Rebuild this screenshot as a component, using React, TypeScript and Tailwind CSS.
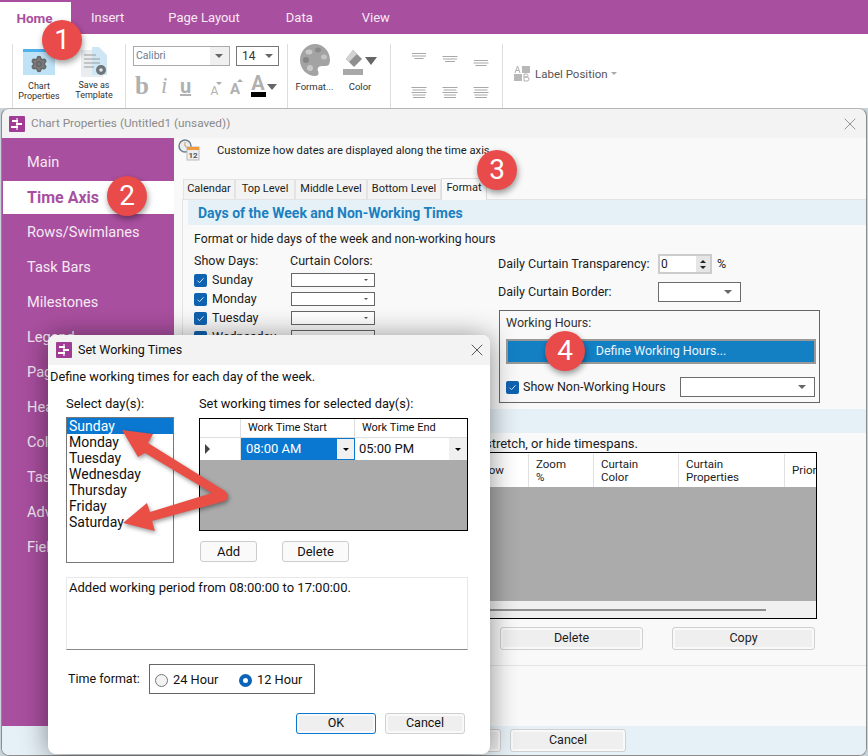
import { Settings, X } from "lucide-react";

const NAV = ["Main", "Time Axis", "Rows/Swimlanes", "Task Bars", "Milestones", "Legend", "Pages", "Header", "Columns", "Tasks", "Advanced", "Fields"];
const DAYS = ["Sunday", "Monday", "Tuesday", "Wednesday", "Thursday", "Friday", "Saturday"];
const TABS = [
  { label: "Calendar", w: "w-[52px]" },
  { label: "Top Level", w: "w-[60px]" },
  { label: "Middle Level", w: "w-[72px]" },
  { label: "Bottom Level", w: "w-[74px]" },
];
const COLS = [
  { label: "Zoom %", w: "w-[65px]" },
  { label: "Curtain Color", w: "w-[85px]" },
  { label: "Curtain Properties", w: "w-[106px]" },
];

const Caret = ({ className = "border-x-[4px] border-t-[4px] border-t-[#666]" }: { className?: string }) => (
  <span className={`h-0 w-0 border-x-transparent ${className}`} />
);

const Badge = ({ n, className }: { n: number; className: string }) => (
  <div className={`absolute flex h-10 w-10 items-center justify-center rounded-full bg-[#e94a4a] text-[28px] leading-none text-white shadow-[1px_3px_6px_rgba(0,0,0,0.4)] ${className}`}>
    {n}
  </div>
);

const AppIcon = () => (
  <svg width="16" height="16" viewBox="0 0 16 16" className="shrink-0">
    <rect width="16" height="16" rx="1" fill="#a03c96" />
    <path d="M7 2h2v12H7z" fill="#d9a8d3" />
    <path d="M3 4h6v2H3zM7 7h6v2H7zM2 10h7v2H2z" fill="#fff" />
  </svg>
);

const Check = () => (
  <span className="flex h-[13px] w-[13px] shrink-0 items-center justify-center rounded-[2px] bg-[#0f62b0]">
    <svg width="9" height="9" viewBox="0 0 9 9">
      <path d="M1.5 4.7l2 2 4-4.4" fill="none" stroke="#cfe3f5" strokeWidth="1" />
    </svg>
  </span>
);

const DropBox = ({ className }: { className: string }) => (
  <div className={`flex items-center justify-end border border-[#6b6b6b] bg-white pr-2 ${className}`}>
    <Caret />
  </div>
);

const Btn = ({ label, className }: { label: string; className: string }) => (
  <div className={`flex items-center justify-center rounded-[3px] border bg-[#efefef] text-[12.5px] shadow-[inset_0_0_0_2px_#f9f9f9] ${className}`}>
    {label}
  </div>
);

const AlignIcon = ({ widths, className = "" }: { widths: number[]; className?: string }) => (
  <svg width="16" height="12" viewBox="0 0 16 12" className={className}>
    {widths.map((w, i) => (
      <rect key={i} x={(16 - w) / 2} y={i * 2.5} width={w} height="1" fill="#a8a8a8" />
    ))}
  </svg>
);

const Ribbon = () => (
  <div>
    <div className="flex h-[34px] items-end bg-[#a94f9f] text-[13px] text-[#f6eaf5]">
      <div className="flex h-8 w-[71px] items-center justify-center bg-white pr-[2px] text-[13.5px] font-bold text-[#a94f9f]">Home</div>
      <div className="flex h-8 items-center pl-5">Insert</div>
      <div className="flex h-8 items-center pl-[44px]">Page Layout</div>
      <div className="flex h-8 items-center pl-[46px]">Data</div>
      <div className="flex h-8 items-center pl-[49px]">View</div>
    </div>
    <div className="flex h-[74px] bg-white pt-[10px] text-[#333]">
      <div className="w-[13px] border-r border-[#ddd]" />
      <div className="flex w-[113px] border-r border-[#ddd] pl-[6px] pt-[3px] text-center text-[9px] leading-[10px]">
        <div className="flex w-[40px] flex-col items-center">
          <div className="mt-[2px] flex h-[26px] w-[32px] items-center justify-center border-t-[3px] border-[#4db2ee] bg-[#bfe2f6]">
            <Settings size={18} fill="#7b7b7b" stroke="#666" />
          </div>
          <div className="mt-[6px]">Chart<br />Properties</div>
        </div>
        <div className="ml-[12px] flex w-[46px] flex-col items-center">
          <svg width="32" height="30" viewBox="0 0 32 30">
            <path d="M3 3h14l8 7v20H3z" fill="#e9edf0" />
            <path d="M14 0h7l8 8v20H14z" fill="#cfe6f5" />
            <path d="M6 8h12M6 12h16M6 16h16M6 20h10" stroke="#9a9a9a" />
            <circle cx="23" cy="23" r="5" fill="#6f7478" />
            <circle cx="23" cy="23" r="1.8" fill="#dfe8ee" />
          </svg>
          <div className="mt-[3px]">Save as<br />Template</div>
        </div>
      </div>
      <div className="flex w-[162px] flex-col border-r border-[#ddd] pl-[7px] pt-[2px]">
        <div className="flex gap-[6px]">
          <div className="flex h-[20px] w-[97px] items-center justify-between border border-[#aaa] bg-[#f0f0f0] pr-[6px]">
            <span className="flex h-full w-[76px] items-center bg-white pl-[2px] text-[10.5px] text-[#6b7c90]">Calibri</span>
            <Caret />
          </div>
          <div className="flex h-[20px] w-[43px] items-center justify-between border border-[#777] px-[5px] text-[12px]">
            14
            <Caret />
          </div>
        </div>
        <div className="mt-[9px] flex items-end text-[#b0b0b0]">
          <span className="w-[27px] pl-[2px] font-['Liberation_Serif',serif] text-[25px] leading-[22px] font-bold">b</span>
          <span className="w-[20px] pl-[1px] font-['Liberation_Serif',serif] text-[23px] leading-[22px] italic">i</span>
          <span className="w-[27px] text-[20px] leading-[22px] font-bold underline">u</span>
          <span className="flex w-[20px] flex-col items-center pr-[5px] text-[12px] leading-[12px]">
            <Caret className="ml-[8px] border-x-[3px] border-t-[3px] border-t-[#aaa]" />
            A
          </span>
          <span className="flex w-[23px] flex-col items-center pr-[7px] text-[15px] leading-[15px] font-bold">
            <span className="ml-[10px] h-0 w-0 border-x-[3px] border-b-[3px] border-x-transparent border-b-[#aaa]" />
            A
          </span>
          <span className="flex w-[16px] flex-col items-center text-[20px] leading-[16px] font-bold">
            A
            <span className="mt-[1px] h-[5px] w-[15px] bg-black" />
          </span>
          <Caret className="mb-[7px] ml-[1px] border-x-[5px] border-t-[6px] border-t-[#666]" />
        </div>
      </div>
      <div className="flex w-[103px] border-r border-[#ddd] pl-2 text-center text-[9.5px]">
        <div className="flex w-[37px] flex-col items-center">
          <svg width="30" height="32" viewBox="0 0 30 32">
            <path d="M15 0C7 0 0 7 0 16s7 16 15 16c4 0 4-3 3-5s0-5 4-5h4c3 0 4-3 4-6C30 7 23 0 15 0z" fill="#a3a3a3" />
            <ellipse cx="9" cy="8" rx="3.5" ry="2.5" fill="#c9c9c9" />
            <ellipse cx="18" cy="6" rx="3" ry="2.5" fill="#8a8a8a" />
            <ellipse cx="24" cy="13" rx="3" ry="2.5" fill="#c4c4c4" />
            <ellipse cx="6" cy="16" rx="3" ry="3" fill="#858585" />
            <ellipse cx="10" cy="24" rx="3" ry="3" fill="#c9c9c9" />
          </svg>
          <div className="mt-[4px] whitespace-nowrap">Format...</div>
        </div>
        <div className="ml-[9px] flex w-[36px] flex-col items-center">
          <div className="flex h-[32px] items-start pt-[5px]">
            <svg width="20" height="26" viewBox="0 0 20 26">
              <path d="M10 1l9 9-8 8-8-8z" fill="#8f8f8f" />
              <path d="M10 1l4 4-8 8-3-3z" fill="#d2d2d2" />
              <rect y="20" width="20" height="6" fill="#a8a8a8" />
            </svg>
            <Caret className="mt-[8px] ml-[2px] border-x-[6px] border-t-[8px] border-t-[#666]" />
          </div>
          <div className="mt-[4px]">Color</div>
        </div>
      </div>
      <div className="w-[112px] border-r border-[#ddd] pl-[20px] pt-[9px]">
        <div className="grid w-[93px] grid-cols-[31px_31px_31px] gap-y-[15px]">
          <AlignIcon widths={[14, 14, 9]} />
          <AlignIcon widths={[15, 14, 10]} className="mt-[3px]" />
          <AlignIcon widths={[14, 15, 11]} className="mt-[7px]" />
          <AlignIcon widths={[15, 13, 15, 13, 12]} />
          <AlignIcon widths={[15, 13, 15, 12, 12]} />
          <AlignIcon widths={[15, 13, 15, 13, 12]} />
        </div>
      </div>
      <div className="flex items-start pl-[10px] pt-[22px] text-[11.5px] leading-[16px]">
        <svg width="18" height="17" viewBox="0 0 18 17" className="mr-[4px] mt-[-1px]">
          <rect x="9" y="1" width="8" height="7" fill="#b8b8b8" />
          <rect x="1" y="9" width="8" height="7" fill="#b8b8b8" />
          <path d="M2 8l2.5-7L7 8M3 5.5h3" fill="none" stroke="#b0b0b0" />
          <path d="M11 9v7h3a2 2 0 000-4h-3 3a1.6 1.6 0 000-3z" fill="none" stroke="#b0b0b0" />
        </svg>
        <span className="text-[#555]">Label Position</span>
        <Caret className="mt-[6px] ml-[3px] border-x-[3px] border-t-[3px] border-t-[#aaa]" />
      </div>
    </div>
  </div>
);

const ChartWindow = () => (
  <div className="absolute top-[108px] left-[1px] flex h-[648px] w-[866px] flex-col overflow-hidden rounded-lg border border-[#8c8c8c] border-t-[#b5b5b5] bg-[#f3f3f3] text-[12.5px] text-[#1c1c1c]">
    <div className="flex h-[29px] shrink-0 items-center pr-[6px] pl-[7px] text-[11.8px] text-[#8b8b8b]">
      <AppIcon />
      <span className="ml-[6px] flex-1">Chart Properties (Untitled1 (unsaved))</span>
      <X size={20} strokeWidth={0.8} className="text-[#666]" />
    </div>
    <div className="flex min-h-0 flex-1">
      <div className="w-[172px] shrink-0 bg-[#a94f9f] pt-[7px] pl-[1px] text-[14.6px] text-[#f5e9f4]">
        {NAV.map((n) => (
          <div
            key={n}
            className={n === "Time Axis" ? "my-px flex h-[33px] items-center bg-white pl-[24px] text-[16px] font-bold text-[#a94f9f]" : "flex h-[35px] items-center pl-[24px]"}
          >
            {n}
          </div>
        ))}
      </div>
      <div className="min-w-0 flex-1 bg-[#f9f9f9]">
        <div className="flex h-[40px] items-start pt-[1px] pl-[4px]">
          <svg width="22" height="22" viewBox="0 0 22 22">
            <circle cx="7" cy="7" r="6" fill="#e8eef2" stroke="#70808c" strokeWidth="1.5" />
            <path d="M7 3v4l3 2" fill="none" stroke="#e2913c" />
            <rect x="9" y="8" width="12" height="13" fill="#eee" stroke="#bbb" />
            <rect x="9" y="8" width="12" height="3" fill="#f09a3e" />
            <text x="15" y="19" fontSize="8" fontWeight="700" textAnchor="middle" fill="#555">12</text>
          </svg>
          <span className="mt-[4px] ml-[17px] text-[11.2px]">Customize how dates are displayed along the time axis</span>
        </div>
        <div className="flex h-[21px] items-end pl-[9px]">
          {TABS.map((t) => (
            <div key={t.label} className={`flex h-[20px] items-center justify-center border border-b-0 border-[#e3e3e3] bg-[#f3f3f3] text-[11px] ${t.w}`}>
              {t.label}
            </div>
          ))}
          <div className="relative top-px flex h-[22px] w-[46px] items-center justify-center border border-b-0 border-[#ddd] bg-[#f9f9f9] pb-[2px] text-[11px]">Format</div>
        </div>
        <div className="ml-[8px] h-[528px] border-t border-l border-[#e3e3e3] pl-[5px]">
          <div className="flex h-[25px] items-center bg-[#e6f1f7] pt-[2px] pl-[10px] text-[14px] font-bold text-[#1b7fc0]">Days of the Week and Non-Working Times</div>
          <div className="flex h-[184px]">
            <div className="w-[306px] pl-[6px]">
              <div className="mt-[7px] text-[12.25px] leading-[14px] whitespace-nowrap">Format or hide days of the week and non-working hours</div>
              <div className="mt-[8px] flex leading-[14px]">
                <span className="w-[96px]">Show Days:</span>
                <span>Curtain Colors:</span>
              </div>
              {DAYS.slice(0, 4).map((d) => (
                <div key={d} className="mt-[5px] flex h-[14px] items-center">
                  <Check />
                  <span className="ml-[5px] w-[79px]">{d}</span>
                  <div className="flex h-[14px] w-[84px] items-center justify-end border border-[#666] bg-white pr-[6px]">
                    <Caret className="border-x-[2.5px] border-t-[2.5px] border-t-[#555]" />
                  </div>
                </div>
              ))}
            </div>
            <div className="pt-[29px] pl-[4px]">
              <div className="flex h-[20px] items-center">
                <span className="w-[160px]">Daily Curtain Transparency:</span>
                <div className="flex h-[20px] w-[54px] items-center justify-between border-2 border-[#ccc] bg-white pl-[1px] text-[12px]">
                  0
                  <div className="flex h-full w-[14px] flex-col items-center justify-center gap-[3px] bg-[#e6e6e6]">
                    <span className="h-0 w-0 border-x-[3px] border-b-[3px] border-x-transparent border-b-[#222]" />
                    <span className="h-0 w-0 border-x-[3px] border-t-[3px] border-x-transparent border-t-[#222]" />
                  </div>
                </div>
                <span className="ml-[5px]">%</span>
              </div>
              <div className="mt-[8px] flex h-[20px] items-center">
                <span className="w-[160px]">Daily Curtain Border:</span>
                <DropBox className="h-[20px] w-[83px]" />
              </div>
              <div className="mt-[8px] ml-px h-[93px] w-[321px] border border-[#666] pt-[4px] pr-[3px] pl-[6px]">
                <div className="leading-[16px] text-[#333]">Working Hours:</div>
                <div className="mt-[8px] flex h-[25px] items-center justify-center border-2 border-[#999] bg-[#1380c4] text-[#eaf4fb]">Define Working Hours...</div>
                <div className="mt-[13px] flex items-center">
                  <Check />
                  <span className="ml-[4px] w-[157px]">Show Non-Working Hours</span>
                  <DropBox className="h-[20px] w-[135px]" />
                </div>
              </div>
            </div>
          </div>
          <div className="h-[24px] bg-[#e6f1f7]" />
          <div className="flex h-[19px] items-end justify-end pr-[228px] text-[13px] leading-[16px]">, stretch, or hide timespans.</div>
          <div className="ml-[6px] flex h-[167px] w-[623px] flex-col border border-black bg-[#ababab]">
            <div className="flex h-[34px] bg-white pt-px text-[11.5px] leading-[13px]">
              <div className="flex flex-1 items-center justify-end border-r border-[#e0e0e0] pr-[24px]">Show</div>
              {COLS.map((c) => (
                <div key={c.label} className={`flex items-center border-r border-[#e0e0e0] pl-[7px] ${c.w}`}>
                  <span className="w-[36px]">{c.label}</span>
                </div>
              ))}
              <div className="flex w-[31px] items-center overflow-hidden pl-[7px]">Priority</div>
            </div>
            <div className="flex-1" />
            <div className="flex h-[17px] items-center bg-[#f0f0f0] pr-[50px]">
              <div className="h-[2px] flex-1 bg-[#8f8f8f]" />
            </div>
          </div>
          <div className="mt-[8px] flex justify-end gap-[29px] pr-[51px]">
            <Btn label="Delete" className="h-[23px] w-[143px] border-[#d0d0d0]" />
            <Btn label="Copy" className="h-[23px] w-[143px] border-[#d0d0d0]" />
          </div>
          <div className="mt-[15px] border-t border-[#e5e5e5]" />
        </div>
      </div>
    </div>
    <div className="flex h-[29px] shrink-0 items-start justify-end gap-[9px] bg-[#e6f1f7] pt-[3px] pr-[240px]">
      <Btn label="OK" className="h-[23px] w-[116px] border-[#d0d0d0]" />
      <Btn label="Cancel" className="h-[23px] w-[116px] border-[#d0d0d0]" />
    </div>
  </div>
);

const WorkingTimes = () => (
  <div className="absolute top-[335px] left-[48px] flex h-[419px] w-[442px] flex-col overflow-hidden rounded-lg bg-white text-[12.8px] text-[#111] shadow-[0_2px_28px_rgba(0,0,0,0.45)]">
    <div className="flex h-[30px] shrink-0 items-center bg-[#f3f3f3] pr-[3px] pl-[8px] text-[12.5px]">
      <AppIcon />
      <span className="ml-[6px] flex-1">Set Working Times</span>
      <X size={20} strokeWidth={0.9} className="text-[#222]" />
    </div>
    <div className="pt-[4px] pl-[2px] leading-[16px]">Define working times for each day of the week.</div>
    <div className="mt-[11px] flex pl-[18px]">
      <div className="w-[133px]">
        <div className="text-[13px] leading-[15px]">Select day(s):</div>
        <div className="mt-[6px] h-[146px] w-[108px] border border-[#777] text-[14px] leading-[16px]">
          {DAYS.map((d) => (
            <div key={d} className={d === "Sunday" ? "bg-[#0a78d0] pl-[2px] text-white" : "pl-[2px]"}>{d}</div>
          ))}
        </div>
      </div>
      <div>
        <div className="leading-[15px]">Set working times for selected day(s):</div>
        <div className="mt-[7px] flex h-[113px] w-[269px] flex-col border border-black bg-[#ababab]">
          <div className="flex h-[19px] bg-white text-[11px]">
            <div className="w-[41px] border-r border-b border-[#ddd]" />
            <div className="flex w-[114px] items-center border-r border-b border-[#ddd] pl-[7px]">Work Time Start</div>
            <div className="flex flex-1 items-center border-b border-[#ddd] pl-[7px]">Work Time End</div>
          </div>
          <div className="flex h-[22px] bg-white text-[13px]">
            <div className="flex w-[41px] items-center border-r border-[#ddd] pl-[5px]">
              <span className="h-0 w-0 border-y-[5px] border-l-[5px] border-y-transparent border-l-[#444]" />
            </div>
            <div className="flex w-[114px] items-center justify-between border border-[#0a78d0] bg-[#0a78d0] pl-[4px] text-white">
              08:00 AM
              <span className="flex h-full w-[17px] items-center justify-center bg-[#f0f0f0]"><Caret className="border-x-[3px] border-t-[3px] border-t-black" /></span>
            </div>
            <div className="flex flex-1 items-center justify-between pl-[4px]">
              05:00 PM
              <span className="flex h-full w-[18px] items-center justify-center bg-[#f0f0f0]"><Caret className="border-x-[3px] border-t-[3px] border-t-black" /></span>
            </div>
          </div>
        </div>
        <div className="mt-[10px] flex gap-[25px] pl-px text-[13px]">
          <div className="flex h-[21px] w-[57px] items-center justify-center rounded-[3px] border border-[#ccc] bg-[#fafafa]">Add</div>
          <div className="flex h-[21px] w-[67px] items-center justify-center rounded-[3px] border border-[#ccc] bg-[#fafafa]">Delete</div>
        </div>
      </div>
    </div>
    <div className="mt-[14px] ml-[18px] h-[73px] w-[402px] border border-[#e8e8e8] border-b-[#888] pt-[2px] pl-[2px] text-[13px] leading-[16px]">
      Added working period from 08:00:00 to 17:00:00.
    </div>
    <div className="mt-[14px] ml-[20px] flex items-center">
      <span className="w-[81px] text-[12.5px]">Time format:</span>
      <div className="flex h-[30px] w-[166px] items-center border border-[#666] pt-[2px] pl-[5px]">
        <span className="h-[13px] w-[13px] rounded-full border border-[#777] bg-[#f3f3f3]" />
        <span className="ml-[5px] w-[66px]">24 Hour</span>
        <span className="h-[13px] w-[13px] rounded-full border-[4px] border-[#0a64b8] bg-white" />
        <span className="ml-[5px]">12 Hour</span>
      </div>
    </div>
    <div className="mt-[19px] flex justify-end gap-[9px] pr-[25px]">
      <Btn label="OK" className="h-[21px] w-[80px] border-[#0a78d0]" />
      <Btn label="Cancel" className="h-[21px] w-[80px] border-[#d0d0d0]" />
    </div>
  </div>
);

const Arrows = () => (
  <svg width="868" height="756" className="pointer-events-none absolute top-0 left-0 drop-shadow-[1px_2px_2px_rgba(0,0,0,0.4)]">
    <path d="M122 430L153 434L148 443L225 491Q231 496 225 501L152 521L155 531L123 523L147 503L150 512L212 493L145 453L138 457Z" fill="#e94f45" />
  </svg>
);

export default function App() {
  return (
    <div className="relative h-[756px] w-[868px] overflow-hidden bg-[#c7d3d8] font-['Roboto',sans-serif]">
      <Ribbon />
      <ChartWindow />
      <WorkingTimes />
      <Arrows />
      <Badge n={1} className="top-[20px] left-[42px]" />
      <Badge n={2} className="top-[176px] left-[107px]" />
      <Badge n={3} className="top-[150px] left-[477px]" />
      <Badge n={4} className="top-[331px] left-[545px]" />
    </div>
  );
}
